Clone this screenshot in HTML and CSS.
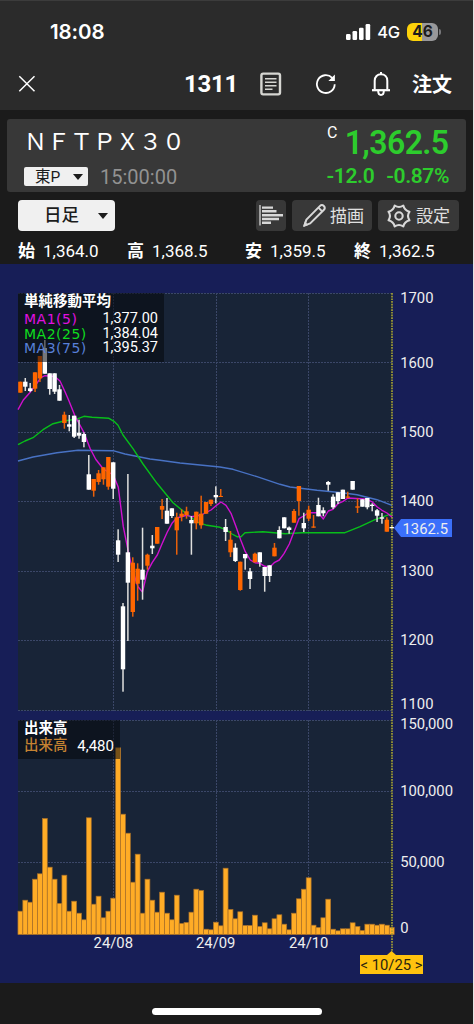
FILE: index.html
```html
<!DOCTYPE html>
<html lang="ja">
<head>
    <meta charset="UTF-8">
    <meta name="viewport" content="width=device-width, initial-scale=1.0">
    <title>1311 NFTPX30</title>
    <link rel="stylesheet" href="styles.css">
</head>
<body>
<div class="app">
    <header class="top">
        <div class="status">
            <span class="clock">18:08</span>
            <div class="status-right">
                <svg class="signal" width="25" height="16" viewBox="0 0 25 16" fill="#fff">
                    <rect x="0" y="10" width="4.6" height="6" rx="1.2"/>
                    <rect x="6.5" y="7" width="4.6" height="9" rx="1.2"/>
                    <rect x="13" y="3.8" width="4.6" height="12.2" rx="1.2"/>
                    <rect x="19.6" y="0" width="4.6" height="16" rx="1.2"/>
                </svg>
                <span class="network">4G</span>
                <span class="battery">46</span>
                <span class="battery-tip"></span>
            </div>
        </div>
        <nav class="nav">
            <svg class="close" width="18" height="18" viewBox="0 0 18 18" stroke="#fff" stroke-width="1.5">
                <path d="M1.3 1.3 L16.5 16.3 M16.5 1.3 L1.3 16.3"/>
            </svg>
            <span class="code">1311</span>
            <svg class="memo" width="22" height="24" viewBox="0 0 22 24" fill="none" stroke="#d6d6d2">
                <rect x="1.4" y="1.6" width="18.6" height="20.8" rx="1.8" stroke-width="2.4"/>
                <path d="M5 6.7h11.5M5 10.2h11.5M5 13.7h11.5M5 17.3h7.5" stroke-width="1.6"/>
            </svg>
            <svg class="reload" width="22" height="22" viewBox="0 0 22 22" fill="none" stroke="#fff" stroke-width="1.8">
                <path d="M19.7 11.2 A8.9 8.9 0 1 1 17.2 4.9"/>
                <path d="M19.9 1.6 V8 H13.4Z" fill="#fff" stroke="none"/>
            </svg>
            <svg class="bell" width="20" height="26" viewBox="0 0 20 26" fill="none" stroke="#fff" stroke-width="2">
                <path d="M3.7 18.6 V9.8 C3.7 5.7 6.4 3.3 10 3.3 C13.6 3.3 16.3 5.7 16.3 9.8 V18.6"/>
                <path d="M1 19.2 H19" stroke-width="2.2"/>
                <path d="M10 1 V3.5 M7.2 20 C7.2 25.2 12.8 25.2 12.8 20"/>
            </svg>
            <span class="order">注文</span>
        </nav>
    </header>

    <section class="quote">
        <div class="quote-left">
            <div class="name">&#xFF2E;&#xFF26;&#xFF34;&#xFF30;&#xFF38;&#xFF13;&#xFF10;</div>
            <div class="market-row">
                <span class="market"><span>東P</span><i class="arrow"></i></span>
                <span class="time">15:00:00</span>
            </div>
        </div>
        <div class="quote-right">
            <div class="price-row"><span class="mark">C</span><span class="price">1,362.5</span></div>
            <div class="change"><span>-12.0</span><span>-0.87%</span></div>
        </div>
    </section>

    <section class="tools">
        <span class="period"><span>日足</span><i class="arrow"></i></span>
        <span class="tool tool-vol">
            <svg width="25" height="21" viewBox="0 0 25 21" fill="none" stroke="#d8d8d8">
                <path d="M1 0 V20.5" stroke-width="1.3"/>
                <path d="M3 2.6h11M3 6.3h14.5M3 10.2h21M3 14h17M3 17.8h9" stroke-width="2.4"/>
            </svg>
        </span>
        <span class="tool tool-draw">
            <svg width="25" height="25" viewBox="0 0 25 25" fill="none" stroke="#d8d8d8" stroke-width="2" stroke-linejoin="round">
                <path d="M2.4 22.6 L4.4 16.6 L17.8 3.1 C20.6 0.4 24.4 4.2 21.7 7 L8.2 20.4 Z"/>
                <path d="M16.4 4.6 L20.2 8.4"/>
                <path d="M1 24 L2.8 18.6 L6.3 22.1Z" fill="#d8d8d8" stroke="none"/>
            </svg>
            <span>描画</span>
        </span>
        <span class="tool tool-set">
            <svg width="24" height="24" viewBox="0 0 24 24" fill="none" stroke="#d8d8d8" stroke-width="2.1" stroke-linejoin="round">
                <path d="M22.5 16.3 Q17.5 17.5 16.3 22.5 Q12 19.5 7.7 22.5 Q6.5 17.5 1.5 16.3 Q4.5 12 1.5 7.7 Q6.5 6.5 7.7 1.5 Q12 4.5 16.3 1.5 Q17.5 6.5 22.5 7.7 Q19.5 12 22.5 16.3Z"/>
                <circle cx="12" cy="12" r="3.7"/>
            </svg>
            <span>設定</span>
        </span>
    </section>

    <section class="ohlc">
        <span><b>始</b>1,364.0</span>
        <span><b>高</b>1,368.5</span>
        <span><b>安</b>1,359.5</span>
        <span><b>終</b>1,362.5</span>
    </section>

    <main class="chart">
        <svg id="chart" width="473" height="719" viewBox="0 264 473 719"></svg>
        <div class="legend legend-ma">
            <b>単純移動平均</b>
            <div class="ma1"><span>MA1(5)</span><em>1,377.00</em></div>
            <div class="ma2"><span>MA2(25)</span><em>1,384.04</em></div>
            <div class="ma3"><span>MA3(75)</span><em>1,395.37</em></div>
        </div>
        <div class="legend legend-vol">
            <b>出来高</b>
            <div class="vol"><span>出来高</span><em>4,480</em></div>
        </div>
    </main>

    <footer class="bottom"><span class="home-bar"></span></footer>
</div>
<script src="chart.js"></script>
</body>
</html>
```
FILE: styles.css
```css
* {
    box-sizing: border-box;
}
body {
    margin: 0;
    background: #1b1b1b;
    color: #fff;
    font-family: Roboto, "Noto Sans CJK JP", sans-serif;
}
.app {
    width: 474px;
    height: 1024px;
    display: flex;
    flex-direction: column;
    border-right: 1px solid #e4e4e4;
    overflow: hidden;
}
.top {
    height: 110px;
    background: #2b2b2b;
    border-top: 1px solid #3c3c3c;
}
.status {
    height: 61px;
    padding: 0 32px 0 50px;
    display: flex;
    align-items: center;
    justify-content: space-between;
    font-family: Inter, sans-serif;
}
.clock {
    font-size: 20.5px;
    font-weight: 600;
    letter-spacing: -0.1px;
}
.status-right {
    display: flex;
    align-items: center;
}
.network {
    font-size: 16.5px;
    font-weight: 500;
    letter-spacing: -0.2px;
    margin: 0 7px 0 6px;
}
.battery {
    width: 31px;
    height: 18px;
    border-radius: 6px;
    background: linear-gradient(90deg, #fdd20a 48%, #98989a 48%);
    color: #1c1c1c;
    font-size: 15.5px;
    font-weight: 700;
    line-height: 18px;
    text-align: center;
}
.battery-tip {
    width: 2px;
    height: 6px;
    margin-left: 1px;
    border-radius: 0 2px 2px 0;
    background: #77777a;
}
.nav {
    height: 44px;
    padding: 0 21px 0 18px;
    display: flex;
    align-items: center;
}
.code {
    margin-left: auto;
    font-size: 24px;
    font-weight: 700;
    letter-spacing: -0.3px;
}
.memo {
    margin-left: 22px;
}
.reload {
    margin-left: 33px;
}
.bell {
    margin-left: 34px;
}
.order {
    margin-left: 21px;
    padding-bottom: 2px;
    font-size: 20px;
    font-weight: 700;
}
.quote {
    height: 73px;
    margin: 9px 7px 0;
    padding: 0 17px 0 17px;
    display: flex;
    justify-content: space-between;
    background: #383838;
    border-radius: 3px;
}
.name {
    height: 45px;
    font-family: "Noto Sans CJK JP", sans-serif;
    font-size: 23px;
    line-height: 43px;
}
.market-row {
    display: flex;
    align-items: center;
    height: 25px;
}
.market {
    width: 64px;
    height: 19px;
    padding: 0 5px 0 11px;
    display: flex;
    align-items: center;
    justify-content: space-between;
    background: #f0f0f0;
    color: #1c1c1c;
    border-radius: 2px;
    font-size: 15.5px;
}
.market span {
    padding-bottom: 3px;
}
.arrow {
    border-left: 5px solid transparent;
    border-right: 5px solid transparent;
    border-top: 6px solid #1c1c1c;
}
.time {
    margin-left: 12px;
    color: #929292;
    font-size: 20px;
}
.quote-right {
    text-align: right;
    color: #2dcc2d;
}
.price-row {
    height: 45px;
    display: flex;
    justify-content: flex-end;
}
.mark {
    margin: 4px 1px 0 0;
    color: #fff;
    font-size: 16px;
}
.price {
    font-size: 34px;
    font-weight: 600;
    line-height: 47px;
    letter-spacing: -0.6px;
    transform: scaleX(0.94);
    transform-origin: right;
}
.change {
    display: flex;
    justify-content: flex-end;
    gap: 12px;
    font-size: 21px;
    font-weight: 600;
    line-height: 25px;
    letter-spacing: -0.4px;
}
.tools {
    height: 47px;
    padding: 8px 14px 8px 18px;
    display: flex;
}
.period {
    width: 97px;
    height: 31px;
    padding: 0 7px 0 26px;
    display: flex;
    align-items: center;
    justify-content: space-between;
    background: #f0f0f0;
    color: #1c1c1c;
    border-radius: 4px;
    font-size: 17.5px;
    font-weight: 500;
}
.period span {
    padding-bottom: 4px;
}
.tool {
    height: 31px;
    display: flex;
    align-items: center;
    background: #383838;
    border-radius: 4px;
    color: #e0e0e0;
    font-size: 17px;
}
.tool span {
    padding-bottom: 2px;
}
.tool-vol {
    width: 30px;
    margin-left: auto;
    padding-left: 3px;
}
.tool-draw {
    width: 80px;
    margin-left: 6px;
    padding-left: 10px;
    gap: 3px;
}
.tool-set {
    width: 81px;
    margin-left: 6px;
    padding-left: 9px;
    gap: 5px;
}
.ohlc {
    height: 25px;
    padding-left: 18px;
    display: grid;
    grid-template-columns: 109px 118px 109px 109px;
    font-size: 17px;
    line-height: 24px;
    white-space: nowrap;
}
.ohlc b {
    margin-right: 8px;
}
.chart {
    position: relative;
    height: 719px;
    background: #171e57;
}
.chart svg {
    display: block;
}
.legend {
    position: absolute;
    left: 18px;
    padding-left: 6px;
    background: rgba(5, 7, 12, 0.55);
    font-size: 15px;
    white-space: nowrap;
}
.legend b {
    display: block;
    font-size: 14.5px;
}
.legend div {
    display: flex;
    justify-content: space-between;
}
.legend em {
    color: #fff;
    font-style: normal;
}
.legend-ma {
    top: 29px;
    width: 146px;
    height: 69px;
    padding-right: 6px;
}
.legend-ma b {
    margin-bottom: 2px;
    line-height: 17px;
}
.legend-ma div {
    height: 14.5px;
    line-height: 14.5px;
}
.legend-ma em {
    font-size: 14.5px;
}
.legend-ma span {
    font-family: "DejaVu Sans", sans-serif;
    font-size: 14px;
    letter-spacing: 0.5px;
}
.legend-vol {
    top: 456px;
    width: 102px;
    height: 39px;
    padding-right: 6px;
}
.legend-vol b {
    line-height: 17px;
}
.legend-vol div {
    line-height: 18px;
}
.legend-vol span {
    font-size: 14.5px;
    font-weight: 500;
}
.ma1 { color: #e010e0; }
.ma2 { color: #0fdc1e; }
.ma3 { color: #5880d8; }
.vol { color: #c48232; }
.axis {
    fill: #eee;
    font-size: 14.8px;
}
.grid {
    stroke: #3b4768;
    stroke-dasharray: 2 1;
}
.bottom {
    flex: 1;
    padding-top: 25px;
}
.home-bar {
    display: block;
    width: 170px;
    height: 7px;
    margin: 0 auto;
    border-radius: 4px;
    background: #fff;
}
```
FILE: chart.js
```js
// [up, high, body top, body bottom, low]
const candles = [
    [1,381.7,381.7,392.7,392.7],[0,378,381.7,386.7,391],[0,383,388.3,391,392],[1,372.3,372.3,388.7,392],
    [1,356,356,378.5,382],[0,340,348,373.7,373.7],[0,373.3,373.3,389,394.7],[0,373.3,373.3,391.7,394],
    [0,385,389.3,400.7,400.7],[1,411.7,414.7,423,428.7],[0,415,424.3,426.7,431.3],[0,415.7,415.7,436.7,438],
    [0,419.7,432.7,435.7,438.7],[0,432.3,434,442,447.3],[0,455,474.3,489.7,489.7],[1,479,479,490.7,496.7],
    [1,470,473.3,482,484.7],[1,467.3,467.3,479.3,484.7],[1,457,457,486.7,489.7],[0,462.3,462.3,488.7,499],
    [0,529.3,540.3,554.7,562],[0,603,606.3,669.3,691.7],[0,474,552.3,582.7,641],[1,557.3,562.7,612,616.7],
    [1,563.3,568.7,583.7,600.7],[0,527.7,569.7,579.7,599.7],[1,553.7,554.7,565.7,569.7],[0,535,545.7,548.3,554],
    [1,527,527,543.7,543.7],[1,499,506,509.7,519],[0,498,510.7,523.7,523.7],[0,508.3,508.3,516,518],
    [1,512.7,517.3,530.3,554.7],[1,509.3,513.7,516.7,521.3],[1,506.7,511.3,515,518.7],[0,516,520,523.3,554.7],
    [1,511.7,511.7,523.3,529.3],[1,495.7,513.7,525.3,528.7],[1,502,502,513.7,513.7],[1,499.7,499.7,504,506],
    [0,486.3,495,497.3,503.3],[1,489,496,497,497],[0,519,527,532,541],[1,531,539.7,552.3,557],
    [0,543.3,547.7,561,562],[1,561.7,561.7,590,590.7],[0,554,554,558.3,569.7],[0,568,571.3,579,589],
    [1,552.7,553.7,562.3,562.3],[0,552.3,552.3,562.3,566.7],[0,567,567,576,591.7],[0,565.3,565.3,576,582],
    [1,543,547.7,556.3,556.3],[0,526.3,530,538.3,538.3],[0,517.3,517.3,528.3,528.3],[0,526.5,527.5,530,533.7],
    [1,509,511,522.7,522.7],[1,486,486,501,515.7],[0,512.7,523,528.3,532],[1,505.7,509.7,518.7,521],
    [1,515,526.5,527.7,527.7],[0,497.7,505,516.3,516.3],[0,507.3,510.3,513.3,516.3],[0,481,482,484.7,490.7],
    [0,494.3,496.7,507.3,509],[0,492.3,492.3,501,504],[0,489.7,489.7,499,499],[1,491.7,496.5,497.7,498.3],
    [0,481,481,489.7,489.7],[1,498.3,506.3,507.7,513],[0,499.3,499.3,506.7,506.7],[0,498,498,507.3,509.3],
    [0,503.3,504.7,506,511.3],[0,509,510.3,515.7,522],[0,513,517.3,518.7,523.7],[1,517.3,519.7,531.7,531.7],
    [0,525,527,528.3,529.3]
];

// bar heights in px
const volume = [
    23.3,34.3,32.3,55.3,60.7,116,67.3,55.3,31,59.3,23.3,33.3,21.3,14.7,116.7,30.3,38.3,16.7,23.3,36.3,
    186.7,120.3,101.3,52.3,80.3,21.3,55.3,34.3,22.3,42.3,21.3,14.7,39.3,11,12,22.3,45.3,44,5.3,4.7,
    12.3,8.7,66.3,25,15.7,22.7,9,9,19.3,8,11.7,5.7,15.7,19.7,10.3,4.7,21.3,35.7,45.3,56.7,
    9.3,7,16.7,35.3,5.3,3.7,5.7,5.7,11.7,8,4,10.3,10.3,9.3,10.3,9.3,7
];

const ma3 = "18,461 33,457 57,452.7 78,450.3 113,450.7 125,454 150,459 160,460.3 180,463 220,467 233,469.3 257,476.7 280,484.3 290,487 317,490.3 342,492.7 357,494.7 377,499.7 392,505.3";
const ma2 = "18,444.7 25,441 33,437.7 43,429.7 53,423.7 63,421.3 72,419.7 78,418.7 84,416.3 92,417.3 109,418.3 114,421.3 118,425.3 123,435 133,448.7 143,464 157,483.3 173,502.7 190,516.7 198,522.3 207,525.3 220,527.3 227,530.3 232,534 237,536.7 241,536.7 245,532.7 263,531.7 285,533.7 302,532.7 345,532.7 360,526.7 375,519.7 392,513.7";
const ma1 = "18,409.7 23.3,400 30.7,391.7 36.7,383.7 40.7,377.7 45,375.7 50,376 55,376.7 60,381 65,391.7 69,401 75,416 84,432.7 90,448.3 95.7,459.3 103.3,469 113.3,475 118.3,487.3 123.3,526.7 128.3,551.7 133,571.7 138,586.7 142.5,592 147.3,571.7 152.3,562.3 157.3,555 162.3,543.3 167.3,532 172,523.3 176.7,518 186.7,515.3 191.7,516.7 201.3,515 211,510 216,505.7 221,502 226,505.3 231,513.3 235.7,525.7 240.7,540 245.3,551.7 250.3,560 255,562.7 260,563.3 264.7,566.3 269.7,567.3 274.7,562.3 279.3,560 284,553.7 289.3,544 294,531.7 299,518.7 303.7,516 308.7,512.7 316.7,512.7 320.3,515.3 323.3,519 328.3,511 333,509.3 338,503.7 343,501.3 348,498 360,498.7 367.3,499.3 372.3,502 377,506.7 382,510.3 387,513 392,517.3";

const step = 4.886;
const cx = i => 20.4 + i * step;
let out = "";

function rect(x, y, w, h, fill, extra = "") {
    out += `<rect x="${x.toFixed(2)}" y="${y}" width="${w}" height="${h}" fill="${fill}" ${extra}/>`;
}
function line(x1, y1, x2, y2) {
    out += `<line class="grid" x1="${x1}" y1="${y1}" x2="${x2}" y2="${y2}"/>`;
}
function text(x, y, s, extra = "") {
    out += `<text class="axis" x="${x}" y="${y}" ${extra}>${s}</text>`;
}

// panels
rect(18, 293, 374, 418, "#182437");
rect(18, 720, 374, 214.5, "#182437");
[293.5, 362.5, 432.5, 501.5, 571.5, 640.5, 710.5, 720.5, 791.5, 862.5].forEach(y => line(18, y, 392, y));
[113.5, 216.5, 308.5].forEach(x => {
    line(x, 293, x, 711);
    line(x, 720, x, 934);
});

// volume bars
volume.forEach((h, i) => {
    rect(cx(i) - step / 2, (934.5 - h).toFixed(1), step, h, "#ffac26", 'stroke="#a8702a" stroke-width="0.7"');
});

// moving averages sit under the candles
[[ma3, "#4872c4"], [ma2, "#08be1a"], [ma1, "#d010d0"]].forEach(([pts, color]) => {
    out += `<polyline points="${pts}" fill="none" stroke="${color}" stroke-width="1.4" stroke-linejoin="round"/>`;
});

candles.forEach(([up, hi, top, bottom, lo], i) => {
    const color = up ? "#ff6600" : "#fff";
    rect(cx(i) - 0.75, hi, 1.5, (lo - hi).toFixed(1), up ? "#e8600a" : "#e0e0de");
    rect(cx(i) - 2.2, top, 4.4, (bottom - top).toFixed(1), color);
});

// cursor
out += '<line x1="392" y1="293" x2="392" y2="952" stroke="#a9a433" stroke-width="1.6" stroke-dasharray="1.7 1"/>';
out += '<path d="M394 528 L401 519 H452 V537 H401Z" fill="#3b70fa"/>';
text(402.5, 533.5, "1362.5");
out += '<path d="M360 955 H387 L391.5 951 L396 955 H423 V974 H360Z" fill="#ffc20e"/>';
text(391.5, 970, "&lt; 10/25 &gt;", 'text-anchor="middle" style="fill:#2a2410"');

// axis labels
[[302.5, "1700"], [367.5, "1600"], [436.5, "1500"], [506, "1400"], [575.5, "1300"], [645, "1200"], [709, "1100"],
 [729, "150,000"], [795.5, "100,000"], [866.5, "50,000"], [933, "0"]].forEach(([y, s]) => text(400.2, y, s));
[[113.3, "24/08"], [215.7, "24/09"], [308.7, "24/10"]].forEach(([x, s]) => text(x, 948, s, 'text-anchor="middle"'));

document.getElementById("chart").innerHTML = out;
```
